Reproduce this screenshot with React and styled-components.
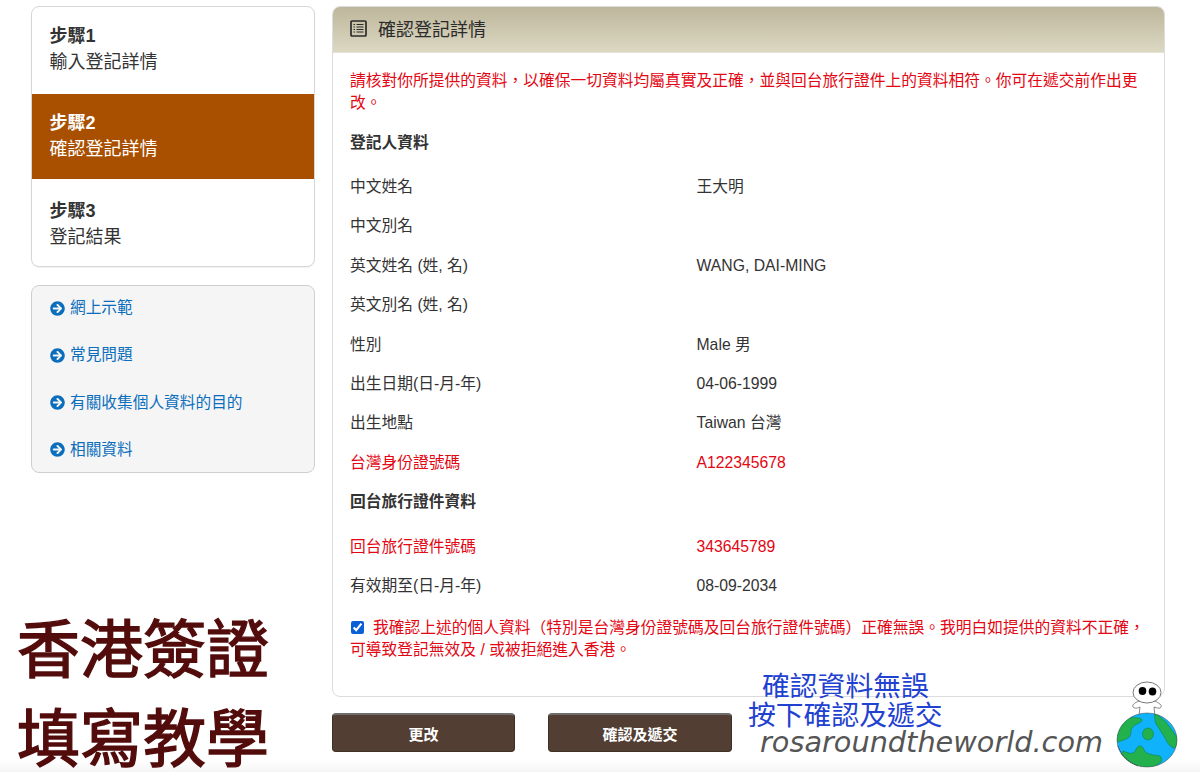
import React from 'react';
import styled, { createGlobalStyle } from 'styled-components';
import { FaArrowCircleRight } from 'react-icons/fa';

const GlobalStyle = createGlobalStyle`
  html, body {
    margin: 0;
    padding: 0;
    background: #fff;
  }
  body {
    font-family: "Liberation Sans", "Noto Sans CJK TC", sans-serif;
    color: #333;
  }
`;

const Page = styled.div`
  position: relative;
  width: 1200px;
  height: 772px;
  overflow: hidden;
  box-sizing: border-box;
  padding: 6px 35px 0 31px;
  display: grid;
  grid-template-columns: 284px 833px;
  column-gap: 17px;
  align-content: start;
  background: linear-gradient(to bottom, #fff 0, #fff 760px, #f5f5f5 772px);
`;

const Sidebar = styled.aside`
  display: flex;
  flex-direction: column;
  gap: 18px;
`;

const StepsCard = styled.div`
  box-sizing: border-box;
  height: 261px;
  border: 1px solid #d6d6d6;
  border-radius: 8px;
  background: #fff;
  overflow: hidden;
  box-shadow: 0 1px 1px rgba(0, 0, 0, 0.05);
`;

const Step = styled.div`
  box-sizing: border-box;
  height: ${(p) => p.$h}px;
  padding: ${(p) => p.$top}px 17.5px 0;
  font-size: 18px;
  line-height: 26px;
  color: ${(p) => (p.$active ? '#fff' : '#333')};
  background: ${(p) => (p.$active ? '#a94f00' : 'transparent')};
`;

const StepTitle = styled.div`
  font-weight: 700;
`;

const LinksCard = styled.nav`
  box-sizing: border-box;
  height: 188px;
  padding: 12px 18px;
  border: 1px solid #cfcfcf;
  border-radius: 8px;
  background: #f5f5f5;
  display: flex;
  flex-direction: column;
  justify-content: space-between;
`;

const LinkRow = styled.a`
  display: flex;
  align-items: center;
  gap: 5px;
  font-size: 15.7px;
  line-height: 20px;
  color: #0a6ebd;
  text-decoration: none;
  svg {
    width: 15px;
    height: 15px;
  }
`;

const Main = styled.main`
  display: flex;
  flex-direction: column;
  gap: 16px;
`;

const Panel = styled.section`
  box-sizing: border-box;
  height: 691px;
  border: 1px solid #dcdcdc;
  border-radius: 8px;
  background: #fff;
  overflow: hidden;
`;

const PanelHeader = styled.header`
  box-sizing: border-box;
  height: 46px;
  padding: 0 17px 3px;
  display: flex;
  align-items: center;
  gap: 11px;
  font-size: 18px;
  color: #2b2b2b;
  background: linear-gradient(to bottom, #bdb69c, #dcd8c2);
  border-bottom: 1px solid #e6e3d6;
`;

const PanelBody = styled.div`
  padding: 16.5px 17px 0;
  font-size: 15.75px;
`;

const Notice = styled.p`
  margin: 0;
  line-height: 22px;
  color: #e30613;
`;

const SectionTitle = styled.h4`
  margin: ${(p) => p.$top}px 0 ${(p) => p.$bottom}px;
  font-size: 15.75px;
  line-height: 22px;
  font-weight: 700;
  color: #333;
`;

const Row = styled.div`
  display: grid;
  grid-template-columns: 346.5px 1fr;
  height: 39.4px;
  line-height: 39.4px;
  color: ${(p) => (p.$alert ? '#e30613' : '#333')};
`;

const Confirm = styled.label`
  display: block;
  margin-top: 11.5px;
  line-height: 22px;
  color: #e30613;
`;

const Tick = styled.input`
  width: 13px;
  height: 13px;
  margin: 0 9px 0 1px;
  vertical-align: -1px;
  accent-color: #0b5fd6;
`;

const Buttons = styled.div`
  display: flex;
  gap: 33px;
`;

const Button = styled.button`
  box-sizing: border-box;
  width: ${(p) => p.$w}px;
  height: 39px;
  border: 1px solid #3f3026;
  border-top: 2px solid #6e6e6e;
  border-radius: 4px;
  background: #523e33;
  color: #fff;
  font-family: inherit;
  font-size: 15px;
  font-weight: 700;
`;

const BigTitle = styled.div`
  position: absolute;
  left: 17px;
  top: ${(p) => p.$top}px;
  font-size: 63px;
  line-height: 62px;
  font-weight: 400;
  -webkit-text-stroke: 1.4px #530c0c;
  color: #530c0c;
  white-space: nowrap;
`;

const BlueNote = styled.div`
  position: absolute;
  left: ${(p) => p.$left}px;
  top: ${(p) => p.$top}px;
  font-size: 27.8px;
  line-height: 32px;
  color: #1f42d0;
  white-space: nowrap;
`;

const Watermark = styled.div`
  position: absolute;
  left: 760px;
  top: 722px;
  font-family: "DejaVu Sans", sans-serif;
  font-style: italic;
  font-size: 28.75px;
  line-height: 40px;
  color: #555;
  white-space: nowrap;
`;

const Mascot = styled.svg`
  position: absolute;
  left: 1110px;
  top: 678px;
  width: 75px;
  height: 94px;
`;

const ListIcon = () => (
  <svg width="17" height="17" viewBox="0 0 17 17" fill="none" stroke="#2b2b2b">
    <rect x="1" y="1" width="15" height="15" rx="1" strokeWidth="1.7" />
    <path d="M3.5 4.5h1.5M6.5 4.5h7M3.5 7h1.5M6.5 7h7M3.5 9.5h1.5M6.5 9.5h7M3.5 12h1.5M6.5 12h7" strokeWidth="1.2" />
  </svg>
);

const MascotArt = () => (
  <Mascot viewBox="0 0 75 94">
    <defs>
      <clipPath id="globe">
        <ellipse cx="37" cy="62" rx="30" ry="27" />
      </clipPath>
    </defs>
    <path d="M29 23c-5 2-7 4-6 6 2 2 5 1 7 0l-1 9h16l-1-9c3 1 6 2 7 0 1-2-2-4-6-6z" fill="#fff" stroke="#555" strokeWidth="0.7" />
    <ellipse cx="37" cy="14.500" rx="14" ry="10.500" fill="#fff" stroke="#555" strokeWidth="0.8" />
    <ellipse cx="32.500" cy="13" rx="3.800" ry="4" fill="#000" />
    <ellipse cx="42.500" cy="13.500" rx="3.800" ry="4" fill="#000" />
    <ellipse cx="37" cy="62" rx="30" ry="27" fill="#0fb2fb" />
    <g clipPath="url(#globe)" fill="#22b14c" stroke="#14692e" strokeWidth="0.4">
      <path d="M20 40c4-1 12 0 12 2 0 3-6 3-10 8-2 3 0 8-4 10-3 2-7 3-11 4l-4-12 10-12z" />
      <path d="M45 35c3 2 7 6 9 7 4 4 9 12 15 20l-4 8c-3 0-6-3-8-6-2-5-6-10-9-15-2-3-3-5-3-7 0-2-1-4 0-7z" />
      <ellipse cx="38" cy="56" rx="5.500" ry="6" />
      <path d="M13 73c3 1 7 3 10 2 3-1 3-7 7-7 4 0 3 5 7 7 4 2 9 2 13 3 2 2 2 4 1 6l-8 6H22L10 78z" />
    </g>
    <ellipse cx="37" cy="62" rx="30" ry="27" fill="none" stroke="#444" strokeWidth="0.5" />
    <path d="M8 68c3 9 10 16 20 20" fill="none" stroke="#444" strokeWidth="0.9" strokeDasharray="1.500 1" />
  </Mascot>
);

const applicant = [
  ['中文姓名', '王大明'],
  ['中文別名', ''],
  ['英文姓名 (姓, 名)', 'WANG, DAI-MING'],
  ['英文別名 (姓, 名)', ''],
  ['性別', 'Male 男'],
  ['出生日期(日-月-年)', '04-06-1999'],
  ['出生地點', 'Taiwan 台灣'],
  ['台灣身份證號碼', 'A122345678', true],
];

const permit = [
  ['回台旅行證件號碼', '343645789', true],
  ['有效期至(日-月-年)', '08-09-2034'],
];

const links = ['網上示範', '常見問題', '有關收集個人資料的目的', '相關資料'];

const App = () => (
  <Page>
    <GlobalStyle />
    <Sidebar>
      <StepsCard>
        <Step $h={87} $top={16}>
          <StepTitle>步驟1</StepTitle>
          輸入登記詳情
        </Step>
        <Step $h={85} $top={16} $active>
          <StepTitle>步驟2</StepTitle>
          確認登記詳情
        </Step>
        <Step $h={87} $top={19}>
          <StepTitle>步驟3</StepTitle>
          登記結果
        </Step>
      </StepsCard>
      <LinksCard>
        {links.map((link) => (
          <LinkRow key={link}>
            <FaArrowCircleRight />
            {link}
          </LinkRow>
        ))}
      </LinksCard>
    </Sidebar>
    <Main>
      <Panel>
        <PanelHeader>
          <ListIcon />
          確認登記詳情
        </PanelHeader>
        <PanelBody>
          <Notice>
            請核對你所提供的資料，以確保一切資料均屬真實及正確，並與回台旅行證件上的資料相符。你可在遞交前作出更改。
          </Notice>
          <SectionTitle $top={18} $bottom={13.5}>登記人資料</SectionTitle>
          {applicant.map(([label, value, alert]) => (
            <Row key={label} $alert={alert}>
              <span>{label}</span>
              <span>{value}</span>
            </Row>
          ))}
          <SectionTitle $top={9} $bottom={13.5}>回台旅行證件資料</SectionTitle>
          {permit.map(([label, value, alert]) => (
            <Row key={label} $alert={alert}>
              <span>{label}</span>
              <span>{value}</span>
            </Row>
          ))}
          <Confirm>
            <Tick type="checkbox" defaultChecked readOnly />
            我確認上述的個人資料（特別是台灣身份證號碼及回台旅行證件號碼）正確無誤。我明白如提供的資料不正確，可導致登記無效及 / 或被拒絕進入香港。
          </Confirm>
        </PanelBody>
      </Panel>
      <Buttons>
        <Button $w={183}>更改</Button>
        <Button $w={184}>確認及遞交</Button>
      </Buttons>
    </Main>
    <BigTitle $top={619}>香港簽證</BigTitle>
    <BigTitle $top={708}>填寫教學</BigTitle>
    <BlueNote $left={762} $top={671}>確認資料無誤</BlueNote>
    <BlueNote $left={748} $top={700}>按下確認及遞交</BlueNote>
    <Watermark>rosaroundtheworld.com</Watermark>
    <MascotArt />
  </Page>
);

export default App;
